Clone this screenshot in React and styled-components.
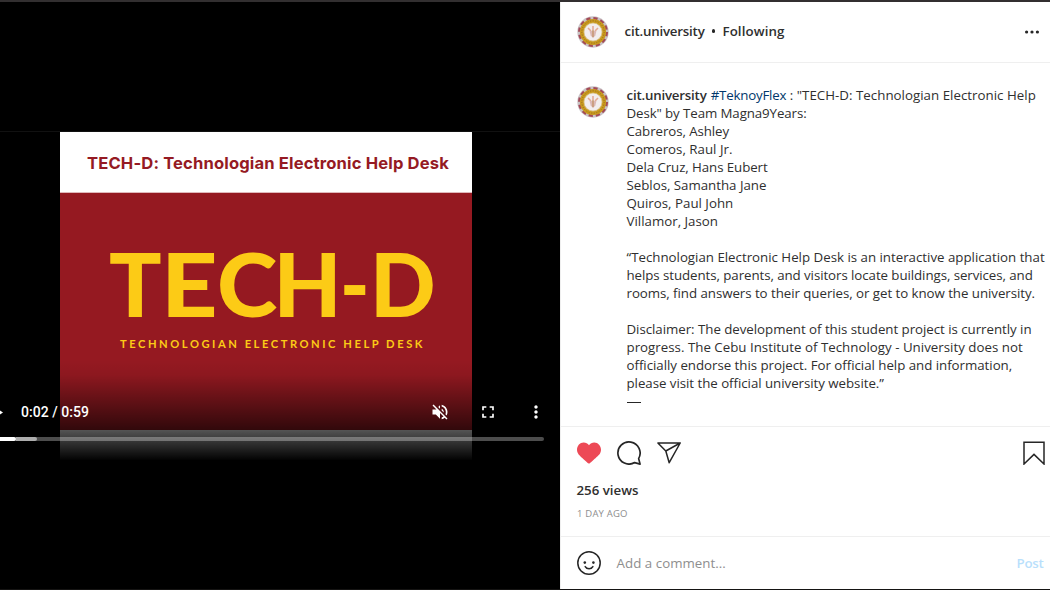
import React from 'react';
import styled, { createGlobalStyle } from 'styled-components';

const GlobalStyle = createGlobalStyle`
  * { box-sizing: border-box; }
  body { margin: 0; background: #2e2c2d; overflow: hidden; }
`;

const Page = styled.div`
  display: flex;
  width: 1050px;
  height: 590px;
  padding: 2px 0 1px;
  background: linear-gradient(#322f30 0 50%, #151413 50%);
  color: #2f2f2f;
  font-family: "Open Sans", "Segoe UI", sans-serif;
  font-size: 13.3px;
`;

/* ---------- video ---------- */
const VideoPane = styled.section`
  position: relative;
  width: 560px;
  flex: none;
  padding-top: 129px;
  background: #000;
`;

const Frame = styled.div`
  border-top: 1px solid #111;
  padding-left: 60px;
`;

const Slide = styled.div`
  width: 412px;
  height: 328px;
  display: flex;
  flex-direction: column;
  background: #fff;
`;

const SlideTitle = styled.div`
  height: 61px;
  padding-left: 27px;
  border-bottom: 1px solid #dfb9bb;
  white-space: nowrap;
  color: #951a23;
  font: 700 16.6px/62px Inter, sans-serif;
  letter-spacing: 0.14px;
`;

const SlideBody = styled.div`
  height: 237px;
  padding-top: 38px;
  background: #951921;
  color: #fccb16;
  white-space: nowrap;
`;

const Wordmark = styled.div`
  display: flex;
  height: 106px;
  padding-left: 49px;
  font: 900 88px/104px Lato, sans-serif;
`;

const Letter = styled.span`
  width: ${p => p.$w}px;
  transform: scaleX(${p => p.$stretch});
  transform-origin: left;
`;

const Tagline = styled.div`
  padding-left: 60px;
  font: 700 11.2px/14px Lato, sans-serif;
  letter-spacing: 2.53px;
`;

const Controls = styled.div`
  position: absolute;
  inset: 358px 0 auto 0;
  height: 101px;
  display: flex;
  flex-direction: column;
  justify-content: flex-end;
  padding-bottom: 20px;
  background: linear-gradient(rgba(0,0,0,0), rgba(0,0,0,0.06) 15%, rgba(0,0,0,0.68) 70%, #000 100%);
`;

const ControlRow = styled.div`
  display: flex;
  align-items: center;
  height: 40px;
  margin-bottom: 5px;
  color: #fff;
`;

const Time = styled.span`
  flex: 1;
  padding-left: 17px;
  font: 500 14px Roboto, sans-serif;
  letter-spacing: 0.03px;
`;

const ControlIcon = styled.svg`
  width: ${p => p.$size || 20}px;
  height: 20px;
  margin-right: ${p => p.$gap || 0}px;
  fill: currentColor;
`;

const Track = styled.div`
  display: flex;
  width: 544px;
  height: 4px;
  border-radius: 0 2px 2px 0;
  background: rgba(255,255,255,0.3);
`;

const Segment = styled.div`
  width: ${p => p.$w}px;
  border-radius: 0 2px 2px 0;
  background: ${p => p.$c};
`;

/* ---------- post ---------- */
const Post = styled.section`
  flex: 1;
  display: flex;
  flex-direction: column;
  border-left: 1px solid #efefef;
  background: #fff;
`;

const Header = styled.header`
  display: flex;
  align-items: center;
  height: 61px;
  padding: 0 10px 0 16px;
  border-bottom: 1px solid #efefef;
`;

const Account = styled.div`
  flex: 1;
  display: flex;
  align-items: center;
  margin: -2px 0 0 15.5px;
`;

const Dot = styled.i`
  width: 3.4px;
  height: 3.4px;
  margin: 0 7.5px 0 7px;
  border-radius: 50%;
  background: #262626;
`;

const Text = styled.span`
  white-space: pre;
  letter-spacing: ${p => p.$ls || 0}px;
  font-weight: ${p => p.$weight || 400};
  color: ${p => p.$color || 'inherit'};
`;

const Caption = styled.div`
  display: flex;
  height: 364px;
  padding: 23px 0 0 16px;
  border-bottom: 1px solid #efefef;
`;

const Lines = styled.div`
  margin-left: 17.5px;
`;

const Line = styled.div`
  height: 18px;
  line-height: 18px;
  white-space: pre;
  letter-spacing: ${p => p.$ls || 0}px;
`;

const Rule = styled.div`
  width: 14px;
  height: 1px;
  margin-top: 10px;
  background: #262626;
`;

const Actions = styled.div`
  height: 110px;
  padding: 14px 4px 0 16px;
  border-bottom: 1px solid #efefef;
`;

const IconRow = styled.div`
  display: flex;
  gap: 16px;
  height: 24px;
`;

const Icon = styled.svg`
  width: 24px;
  height: 24px;
  flex: none;
  fill: none;
  stroke: #262626;
  stroke-width: 1.5;
  margin-left: ${p => (p.$end ? 'auto' : 0)};
`;

const Views = styled.div`
  margin: 16px 0 0 -0.5px;
  line-height: 18px;
  font-weight: 600;
`;

const Ago = styled.div`
  margin-top: 6px;
  font-size: 9.5px;
  line-height: 18px;
  letter-spacing: 0.2px;
  color: #8e8e8e;
`;

const CommentBar = styled.div`
  flex: 1;
  display: flex;
  align-items: center;
  padding: 0 6.5px 0 16px;
`;

const Placeholder = styled.span`
  flex: 1;
  padding-left: 15.6px;
  letter-spacing: 0.03px;
  color: #8e8e8e;
`;

const Seal = styled.svg`
  width: 32px;
  height: 32px;
  flex: none;
`;

function Avatar() {
  return (
    <Seal viewBox="0 0 32 32">
      <circle cx="16" cy="16" r="15.7" fill="#c9c3c6" />
      <circle cx="16" cy="16" r="13.7" fill="none" stroke="#a34a58" strokeWidth="2.6" strokeDasharray="4.2 2.97" />
      <circle cx="16" cy="16" r="11.2" fill="none" stroke="#c99a1e" strokeWidth="3.8" />
      <circle cx="16" cy="16" r="11.2" fill="none" stroke="#946c20" strokeWidth="0.9" strokeDasharray="1.2 1.4" />
      <circle cx="16" cy="16" r="9" fill="#f3eeee" stroke="#d9b85a" strokeWidth=".6" />
      <path d="M11 12l3 3M21 12l-3 3M16 10v4" stroke="#e3ab95" strokeWidth="1.6" />
      <path d="M12.6 15h6.8l-1 4.2-2.4 3-2.4-3z" fill="#dcb9b6" />
      <path d="M16 14v7" stroke="#c4946c" strokeWidth="1.4" />
    </Seal>
  );
}

const LETTERS = [
  ['T', 51.5, 0.99],
  ['E', 56, 1.12],
  ['C', 57, 1.04],
  ['H', 66, 1],
  ['-', 30, 0.9],
  ['D', 66, 0.98],
];

const CAPTION = [
  ['Desk" by Team Magna9Years:', -0.1],
  ['Cabreros, Ashley', -0.08],
  ['Comeros, Raul Jr.', 0],
  ['Dela Cruz, Hans Eubert', -0.08],
  ['Seblos, Samantha Jane', -0.02],
  ['Quiros, Paul John', 0],
  ['Villamor, Jason', 0],
  ['', 0],
  ['“Technologian Electronic Help Desk is an interactive application that', -0.01],
  ['helps students, parents, and visitors locate buildings, services, and', -0.07],
  ['rooms, find answers to their queries, or get to know the university.', -0.05],
  ['', 0],
  ['Disclaimer: The development of this student project is currently in', -0.04],
  ['progress. The Cebu Institute of Technology - University does not', 0.01],
  ['officially endorse this project. For official help and information,', -0.03],
  ['please visit the official university website.”', -0.04],
];

export default function App() {
  return (
    <>
      <GlobalStyle />
      <Page>
        <VideoPane>
          <Frame>
            <Slide>
              <SlideTitle>TECH-D: Technologian Electronic Help Desk</SlideTitle>
              <SlideBody>
                <Wordmark>
                  {LETTERS.map(([ch, w, s]) => <Letter key={ch} $w={w} $stretch={s}>{ch}</Letter>)}
                </Wordmark>
                <Tagline>TECHNOLOGIAN ELECTRONIC HELP DESK</Tagline>
              </SlideBody>
            </Slide>
          </Frame>
          <Controls>
            <ControlRow>
              <ControlIcon $size={4} viewBox="0 0 4 20"><path d="M-7 4v13l10-6.5z" /></ControlIcon>
              <Time>0:02 / 0:59</Time>
              <ControlIcon $gap={28} viewBox="0 0 24 24">
                <path d="M16.5 12c0-1.77-1.02-3.29-2.5-4.03v2.21l2.45 2.45c.03-.2.05-.41.05-.63zm2.5 0c0 .94-.2 1.82-.54 2.64l1.51 1.51C20.63 14.91 21 13.5 21 12c0-4.28-2.99-7.86-7-8.77v2.06c2.89.86 5 3.54 5 6.71zM4.27 3L3 4.27 7.73 9H3v6h4l5 5v-6.73l4.25 4.25c-.67.52-1.42.93-2.25 1.18v2.06c1.38-.31 2.63-.95 3.69-1.81L19.73 21 21 19.73l-9-9L4.27 3zM12 4L9.91 6.09 12 8.18V4z" />
              </ControlIcon>
              <ControlIcon $gap={28} viewBox="0 0 24 24">
                <path d="M7 14H5v5h5v-2H7v-3zm-2-4h2V7h3V5H5v5zm12 7h-3v2h5v-5h-2v3zM14 5v2h3v3h2V5h-5z" />
              </ControlIcon>
              <ControlIcon $gap={14} viewBox="0 0 24 24">
                <path d="M12 8c1.1 0 2-.9 2-2s-.9-2-2-2-2 .9-2 2 .9 2 2 2zm0 2c-1.1 0-2 .9-2 2s.9 2 2 2 2-.9 2-2-.9-2-2-2zm0 6c-1.1 0-2 .9-2 2s.9 2 2 2 2-.9 2-2-.9-2-2-2z" />
              </ControlIcon>
            </ControlRow>
            <Track>
              <Segment $w={16} $c="#fff" />
              <Segment $w={21} $c="rgba(255,255,255,0.54)" />
            </Track>
          </Controls>
        </VideoPane>

        <Post>
          <Header>
            <Avatar />
            <Account>
              <Text $weight={600} $ls={-0.2}>cit.university</Text>
              <Dot />
              <Text $weight={600} $ls={0.1}>Following</Text>
            </Account>
            <svg width="16" height="6" viewBox="0 0 16 6" fill="#262626">
              <circle cx="2.6" cy="3" r="1.6" />
              <circle cx="8" cy="3" r="1.6" />
              <circle cx="13.4" cy="3" r="1.6" />
            </svg>
          </Header>

          <Caption>
            <Avatar />
            <Lines>
              <Line>
                <Text $weight={600} $ls={-0.2}>cit.university</Text>
                <Text $ls={0.6}> </Text>
                <Text $color="#00376b" $ls={-0.2}>#TeknoyFlex</Text>
                <Text $ls={0.02}> : "TECH-D: Technologian Electronic Help</Text>
              </Line>
              {CAPTION.map(([text, ls], i) => <Line key={i} $ls={ls}>{text}</Line>)}
              <Rule />
            </Lines>
          </Caption>

          <Actions>
            <IconRow>
              <svg width="24" height="24" viewBox="0 0 48 48" fill="#ed4956">
                <path d="M34.6 3.1c-4.5 0-7.9 1.8-10.6 5.6-2.7-3.7-6.1-5.5-10.6-5.5C6 3.1 0 9.6 0 17.6c0 7.3 5.4 12 10.6 16.5.6.5 1.3 1.1 1.9 1.7l2.3 2c4.4 3.9 6.6 5.9 7.6 6.5.5.3 1.1.5 1.6.5s1.1-.2 1.6-.5c1-.6 2.8-2.2 7.8-6.8l2-1.8c.7-.6 1.3-1.2 2-1.7C42.7 29.6 48 25 48 17.6c0-8-6-14.5-13.4-14.5z" />
              </svg>
              <Icon viewBox="1.2 1.2 21.6 21.6"><path d="M20.656 17.008a9.993 9.993 0 1 0-3.59 3.615L22 22Z" strokeLinejoin="round" /></Icon>
              <Icon viewBox="0 0 24 24"><path d="M23.2 2H.9L8.8 10 12.2 21.7ZM8.8 10L23.2 2" strokeLinejoin="round" /></Icon>
              <Icon $end viewBox="0 0 24 24"><path d="M2 1.3H22V23L12 13.4 2 23Z" /></Icon>
            </IconRow>
            <Views>256 views</Views>
            <Ago>1 DAY AGO</Ago>
          </Actions>

          <CommentBar>
            <Icon viewBox="0 0 24 24">
              <circle cx="12" cy="12" r="11.2" />
              <circle cx="7.8" cy="11.6" r="1.3" fill="#262626" stroke="none" />
              <circle cx="16.4" cy="11.6" r="1.3" fill="#262626" stroke="none" />
              <path d="M8.2 15.6c1.7 2.9 6 2.9 7.7 0" strokeLinecap="round" />
            </Icon>
            <Placeholder>Add a comment...</Placeholder>
            <Text $weight={600} $color="#b9dffc" $ls={-0.25}>Post</Text>
          </CommentBar>
        </Post>
      </Page>
    </>
  );
}
